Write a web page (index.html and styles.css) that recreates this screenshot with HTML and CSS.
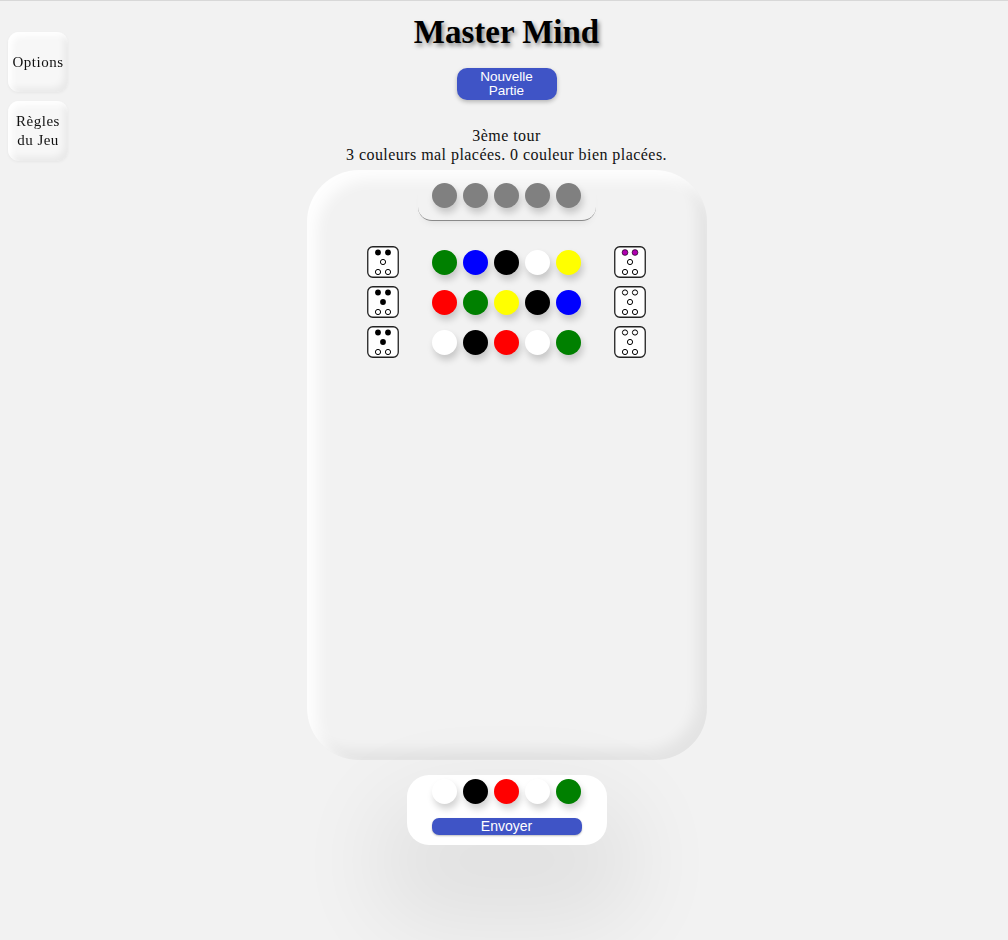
FILE: index.html
```html
<!DOCTYPE html>
<html lang="fr">
<head>
<meta charset="utf-8">
<title>Master Mind</title>
<link rel="stylesheet" href="styles.css">
</head>
<body>
<nav class="side">
  <button class="side-btn">Options</button>
  <button class="side-btn">Règles<br>du Jeu</button>
</nav>
<main class="main">
  <h1 class="title">Master Mind</h1>
  <button class="new-game">Nouvelle<br>Partie</button>
  <div class="status">
    <div>3ème tour</div>
    <div>3 couleurs mal placées. 0 couleur bien placées.</div>
  </div>
  <section class="board">
    <div class="secret">
      <span class="peg grey"></span><span class="peg grey"></span><span class="peg grey"></span><span class="peg grey"></span><span class="peg grey"></span>
    </div>
    <div class="rows">
      <div class="row">
        <svg class="die" viewBox="0 0 32 32"><rect x="0.75" y="0.75" width="30.5" height="30.5" rx="5" fill="#fff" stroke="#222" stroke-width="1.3"/><circle cx="11" cy="6.5" r="2.9" fill="#000"/><circle cx="21" cy="6.5" r="2.9" fill="#000"/><circle cx="16" cy="16" r="2.6" fill="none" stroke="#000" stroke-width="1"/><circle cx="11" cy="26" r="2.6" fill="none" stroke="#000" stroke-width="1"/><circle cx="21" cy="26" r="2.6" fill="none" stroke="#000" stroke-width="1"/></svg>
        <div class="pegs"><span class="peg green"></span><span class="peg blue"></span><span class="peg black"></span><span class="peg white"></span><span class="peg yellow"></span></div>
        <svg class="die" viewBox="0 0 32 32"><rect x="0.75" y="0.75" width="30.5" height="30.5" rx="5" fill="#fff" stroke="#222" stroke-width="1.3"/><circle cx="11" cy="6.5" r="2.9" fill="#b000b0" stroke="#000" stroke-width="0.6"/><circle cx="21" cy="6.5" r="2.9" fill="#b000b0" stroke="#000" stroke-width="0.6"/><circle cx="16" cy="16" r="2.6" fill="none" stroke="#000" stroke-width="1"/><circle cx="11" cy="26" r="2.6" fill="none" stroke="#000" stroke-width="1"/><circle cx="21" cy="26" r="2.6" fill="none" stroke="#000" stroke-width="1"/></svg>
      </div>
      <div class="row">
        <svg class="die" viewBox="0 0 32 32"><rect x="0.75" y="0.75" width="30.5" height="30.5" rx="5" fill="#fff" stroke="#222" stroke-width="1.3"/><circle cx="11" cy="6.5" r="2.9" fill="#000"/><circle cx="21" cy="6.5" r="2.9" fill="#000"/><circle cx="16" cy="16" r="2.9" fill="#000"/><circle cx="11" cy="26" r="2.6" fill="none" stroke="#000" stroke-width="1"/><circle cx="21" cy="26" r="2.6" fill="none" stroke="#000" stroke-width="1"/></svg>
        <div class="pegs"><span class="peg red"></span><span class="peg green"></span><span class="peg yellow"></span><span class="peg black"></span><span class="peg blue"></span></div>
        <svg class="die" viewBox="0 0 32 32"><rect x="0.75" y="0.75" width="30.5" height="30.5" rx="5" fill="#fff" stroke="#222" stroke-width="1.3"/><circle cx="11" cy="6.5" r="2.6" fill="none" stroke="#000" stroke-width="1"/><circle cx="21" cy="6.5" r="2.6" fill="none" stroke="#000" stroke-width="1"/><circle cx="16" cy="16" r="2.6" fill="none" stroke="#000" stroke-width="1"/><circle cx="11" cy="26" r="2.6" fill="none" stroke="#000" stroke-width="1"/><circle cx="21" cy="26" r="2.6" fill="none" stroke="#000" stroke-width="1"/></svg>
      </div>
      <div class="row">
        <svg class="die" viewBox="0 0 32 32"><rect x="0.75" y="0.75" width="30.5" height="30.5" rx="5" fill="#fff" stroke="#222" stroke-width="1.3"/><circle cx="11" cy="6.5" r="2.9" fill="#000"/><circle cx="21" cy="6.5" r="2.9" fill="#000"/><circle cx="16" cy="16" r="2.9" fill="#000"/><circle cx="11" cy="26" r="2.6" fill="none" stroke="#000" stroke-width="1"/><circle cx="21" cy="26" r="2.6" fill="none" stroke="#000" stroke-width="1"/></svg>
        <div class="pegs"><span class="peg white"></span><span class="peg black"></span><span class="peg red"></span><span class="peg white"></span><span class="peg green"></span></div>
        <svg class="die" viewBox="0 0 32 32"><rect x="0.75" y="0.75" width="30.5" height="30.5" rx="5" fill="#fff" stroke="#222" stroke-width="1.3"/><circle cx="11" cy="6.5" r="2.6" fill="none" stroke="#000" stroke-width="1"/><circle cx="21" cy="6.5" r="2.6" fill="none" stroke="#000" stroke-width="1"/><circle cx="16" cy="16" r="2.6" fill="none" stroke="#000" stroke-width="1"/><circle cx="11" cy="26" r="2.6" fill="none" stroke="#000" stroke-width="1"/><circle cx="21" cy="26" r="2.6" fill="none" stroke="#000" stroke-width="1"/></svg>
      </div>
    </div>
  </section>
  <section class="input">
    <div class="pegs"><span class="peg white"></span><span class="peg black"></span><span class="peg red"></span><span class="peg white"></span><span class="peg green"></span></div>
    <button class="send">Envoyer</button>
  </section>
</main>
</body>
</html>
```
FILE: styles.css
```css
html, body {
  margin: 0;
  padding: 0;
}
body {
  background: #f2f2f2;
  border-top: 1px solid #d8d8d8;
  min-height: 939px;
  font-family: "Liberation Serif", "DejaVu Serif", serif;
  color: #111;
  overflow: hidden;
}
.side {
  position: fixed;
  left: 8px;
  top: 32px;
  display: flex;
  flex-direction: column;
  gap: 9px;
}
.side-btn {
  width: 60px;
  height: 60px;
  padding: 0;
  border: none;
  border-radius: 11px;
  background: #f7f7f7;
  box-shadow: inset 4px 4px 6px #fff, inset -4px -4px 7px rgba(0,0,0,0.06), 0 1px 3px rgba(0,0,0,0.05);
  font-family: "Liberation Serif", "DejaVu Serif", serif;
  font-size: 15px;
  line-height: 19px;
  letter-spacing: 0.5px;
  color: #111;
}
.main {
  display: flex;
  flex-direction: column;
  align-items: center;
  padding-left: 5px;
}
.title {
  margin: 12px 0 0;
  font-size: 33px;
  line-height: 38px;
  font-weight: bold;
  color: #000;
  text-shadow: 2px 3px 4px rgba(0,0,0,0.45);
}
.new-game {
  margin-top: 17px;
  width: 100px;
  height: 32px;
  padding: 0;
  border: none;
  border-radius: 10px;
  background: #3f54c6;
  color: #fff;
  font-family: "Liberation Sans", Arial, sans-serif;
  font-size: 13.5px;
  font-weight: normal;
  line-height: 14px;
  box-shadow: 0 2px 4px rgba(0,0,0,0.25);
}
.status {
  margin-top: 26px;
  text-align: center;
  font-size: 16px;
  line-height: 19px;
  letter-spacing: 0.45px;
}
.board {
  margin-top: 6px;
  width: 400px;
  height: 590px;
  box-sizing: border-box;
  border-radius: 52px;
  background: #f2f2f2;
  box-shadow: inset 10px 10px 14px rgba(255,255,255,0.9), inset -10px -10px 14px rgba(0,0,0,0.06);
  display: flex;
  flex-direction: column;
  align-items: center;
  padding-top: 13px;
}
.secret {
  width: 178px;
  height: 38px;
  box-sizing: border-box;
  display: flex;
  justify-content: center;
  gap: 6px;
  border-bottom: 1px solid #8a8a8a;
  border-radius: 0 0 14px 14px;
  box-shadow: 0 6px 8px -6px rgba(0,0,0,0.12);
}
.rows {
  margin-top: 25px;
  display: flex;
  flex-direction: column;
  gap: 8px;
}
.row {
  display: flex;
  align-items: center;
  gap: 33px;
}
.die {
  width: 32px;
  height: 32px;
  display: block;
}
.pegs {
  display: flex;
  gap: 6px;
}
.peg {
  width: 25px;
  height: 25px;
  border-radius: 50%;
  display: block;
  box-shadow: 2px 5px 7px rgba(0,0,0,0.18);
}
.grey { background: #808080; }
.green { background: #008000; }
.blue { background: #0000ff; }
.black { background: #000; }
.white { background: #fff; }
.yellow { background: #ffff00; }
.red { background: #ff0000; }
.input {
  margin-top: 15px;
  width: 200px;
  height: 70px;
  box-sizing: border-box;
  background: #fff;
  border-radius: 22px;
  display: flex;
  flex-direction: column;
  align-items: center;
  padding-top: 4px;
  box-shadow: 0 50px 90px 30px rgba(0,0,0,0.07);
}
.send {
  margin-top: 14px;
  width: 150px;
  height: 17px;
  padding: 0;
  border: none;
  border-radius: 7px;
  background: #3f54c6;
  color: #fff;
  font-family: "Liberation Sans", Arial, sans-serif;
  font-size: 14px;
  font-weight: normal;
  line-height: 17px;
  box-shadow: 0 1px 2px rgba(0,0,0,0.25);
}
```
